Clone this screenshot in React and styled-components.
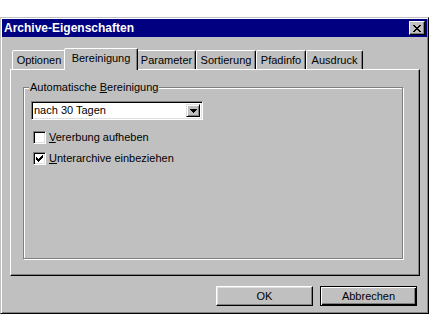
import React from 'react';
import styled, { createGlobalStyle } from 'styled-components';

const GlobalStyle = createGlobalStyle`
  html, body {
    margin: 0;
    padding: 0;
    background: #fff;
  }
  body {
    font-family: "Liberation Sans", Arial, sans-serif;
    font-size: 11px;
    color: #000;
  }
  u {
    text-decoration-thickness: 1px;
    text-underline-offset: 1px;
  }
`;

const tabs = [
  { label: 'Optionen', width: 54 },
  { label: 'Bereinigung', width: 71, active: true },
  { label: 'Parameter', width: 59 },
  { label: 'Sortierung', width: 60 },
  { label: 'Pfadinfo', width: 50 },
  { label: 'Ausdruck', width: 57 },
];

// win95 close glyph, one string per pixel row
const closeGlyph = [
  '11000011',
  '01100110',
  '00111100',
  '00011000',
  '00111100',
  '01100110',
  '11000011',
];

const CloseIcon = () => (
  <svg width="8" height="7" viewBox="0 0 8 7" shapeRendering="crispEdges">
    {closeGlyph.map((row, y) =>
      row.split('').map((c, x) =>
        c === '1' ? <rect key={`${x}-${y}`} x={x} y={y} width="1" height="1" fill="#000" /> : null
      )
    )}
  </svg>
);

const App = () => {
  return (
    <>
      <GlobalStyle />
      <Window>
        <TitleBar>
          <Title>Archive-Eigenschaften</Title>
          <CloseButton>
            <CloseIcon />
          </CloseButton>
        </TitleBar>
        <Body>
          <TabStrip>
            {tabs.map((t) => (
              <Tab key={t.label} $width={t.width} $active={t.active}>
                {t.label}
              </Tab>
            ))}
          </TabStrip>
          <Panel>
            <GroupBox>
              <GroupLabel>
                Automatische <u>B</u>ereinigung
              </GroupLabel>
              <Combo>
                <ComboText>nach 30 Tagen</ComboText>
                <ComboButton>
                  <svg width="7" height="4" viewBox="0 0 7 4" shapeRendering="crispEdges">
                    <path d="M0 0h7v1h-1v1h-1v1h-1v1h-1v-1h-1v-1h-1v-1h-1z" fill="#000" />
                  </svg>
                </ComboButton>
              </Combo>
              <CheckList>
                <CheckRow>
                  <CheckBox />
                  <CheckLabel>
                    <u>V</u>ererbung aufheben
                  </CheckLabel>
                </CheckRow>
                <CheckRow>
                  <CheckBox>
                    <svg width="7" height="7" viewBox="0 0 7 7" shapeRendering="crispEdges">
                      <path
                        d="M6 0h1v3h-1v1h-1v1h-1v1h-1v1h-1v-1h-1v-1h-1v-3h1v1h1v1h1v-1h1v-1h1z"
                        fill="#000"
                      />
                    </svg>
                  </CheckBox>
                  <CheckLabel>
                    <u>U</u>nterarchive einbeziehen
                  </CheckLabel>
                </CheckRow>
              </CheckList>
            </GroupBox>
          </Panel>
          <ButtonRow>
            <Button>OK</Button>
            <Button $default>Abbrechen</Button>
          </ButtonRow>
        </Body>
      </Window>
    </>
  );
};

const Window = styled.div`
  box-sizing: border-box;
  width: 429px;
  height: 297px;
  margin-top: 17px;
  padding: 1px;
  background: #c0c0c0;
  border: 1px solid;
  border-color: #c0c0c0 #000 #000 #c0c0c0;
  box-shadow: inset 1px 1px #fff, inset -1px -1px #808080;
  display: flex;
  flex-direction: column;
`;

const TitleBar = styled.div`
  height: 18px;
  background: #000080;
  display: flex;
  align-items: center;
  justify-content: space-between;
  padding: 0 2px 0 2px;
`;

const Title = styled.div`
  color: #fff;
  font-weight: bold;
  font-size: 12px;
`;

const CloseButton = styled.div`
  box-sizing: border-box;
  width: 16px;
  height: 14px;
  background: #c0c0c0;
  border: 1px solid;
  border-color: #fff #000 #000 #fff;
  box-shadow: inset -1px -1px #808080;
  display: flex;
  align-items: center;
  justify-content: center;
`;

const Body = styled.div`
  flex: 1;
  display: flex;
  flex-direction: column;
  padding: 11px 7px 0 8px;
`;

const TabStrip = styled.div`
  display: flex;
  align-items: flex-end;
  height: 21px;
  padding-left: 2px;
`;

const Tab = styled.div`
  box-sizing: border-box;
  position: relative;
  z-index: ${(p) => (p.$active ? 2 : 0)};
  width: ${(p) => (p.$active ? p.$width + 3 : p.$width)}px;
  height: ${(p) => (p.$active ? 22 : 19)}px;
  margin: ${(p) => (p.$active ? '0 -1px -1px -2px' : '0')};
  padding-bottom: ${(p) => (p.$active ? 3 : 0)}px;
  background: #c0c0c0;
  border: 1px solid;
  border-bottom: none;
  border-color: #fff #000 transparent #fff;
  border-radius: 2px 2px 0 0;
  box-shadow: inset -1px 0 #808080;
  display: flex;
  align-items: center;
  justify-content: center;
  white-space: nowrap;
`;

const Panel = styled.div`
  box-sizing: border-box;
  height: 207px;
  border: 1px solid;
  border-color: #fff #000 #000 #fff;
  box-shadow: inset -1px -1px #808080;
  padding: 17px 0 0 12px;
`;

const GroupBox = styled.div`
  box-sizing: border-box;
  position: relative;
  width: 380px;
  height: 172px;
  border: 1px solid #808080;
  box-shadow: inset 1px 1px #fff, 1px 1px #fff;
  padding: 13px 0 0 7px;
`;

const GroupLabel = styled.div`
  position: absolute;
  top: -8px;
  left: 5px;
  padding: 0 1px;
  line-height: 14px;
  background: #c0c0c0;
`;

const Combo = styled.div`
  box-sizing: border-box;
  width: 172px;
  height: 19px;
  display: flex;
  background: #fff;
  border: 1px solid;
  border-color: #808080 #fff #fff #808080;
  box-shadow: inset 1px 1px #000, inset -1px -1px #dfdfdf;
  padding: 2px 2px 2px 2px;
`;

const ComboText = styled.div`
  flex: 1;
  line-height: 13px;
`;

const ComboButton = styled.div`
  box-sizing: border-box;
  width: 14px;
  background: #c0c0c0;
  border: 1px solid;
  border-color: #dfdfdf #000 #000 #dfdfdf;
  box-shadow: inset 1px 1px #fff, inset -1px -1px #808080;
  display: flex;
  align-items: center;
  justify-content: center;
`;

const CheckList = styled.div`
  display: flex;
  flex-direction: column;
  gap: 8px;
  margin: 11px 0 0 2px;
`;

const CheckRow = styled.div`
  display: flex;
  align-items: center;
  height: 13px;
`;

const CheckBox = styled.div`
  box-sizing: border-box;
  width: 13px;
  height: 13px;
  background: #fff;
  border: 1px solid;
  border-color: #808080 #fff #fff #808080;
  box-shadow: inset 1px 1px #000, inset -1px -1px #dfdfdf;
  display: flex;
  align-items: center;
  justify-content: center;
`;

const CheckLabel = styled.span`
  margin-left: 3px;
  line-height: 13px;
`;

const ButtonRow = styled.div`
  display: flex;
  justify-content: flex-end;
  gap: 7px;
  margin-top: 10px;
  padding-right: 3px;
`;

const Button = styled.div`
  box-sizing: border-box;
  width: 97px;
  height: 20px;
  background: #c0c0c0;
  border: 1px solid;
  border-color: ${(p) => (p.$default ? '#000' : '#fff #000 #000 #fff')};
  box-shadow: ${(p) =>
    p.$default
      ? 'inset 1px 1px #fff, inset -1px -1px #000, inset -2px -2px #808080'
      : 'inset -1px -1px #808080, inset 1px 1px #dfdfdf'};
  display: flex;
  align-items: center;
  justify-content: center;
`;

export default App;
